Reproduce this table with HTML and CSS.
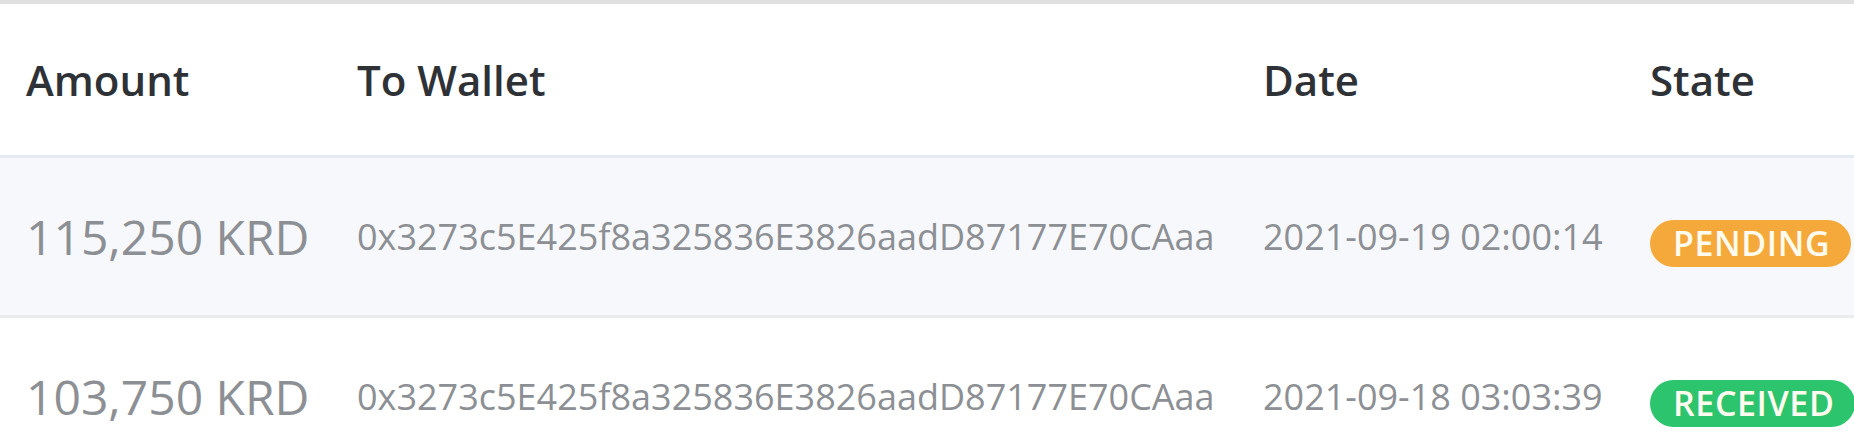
FILE: index.html
```
<html lang="en">

<head>
    <meta charset="UTF-8">
    <meta name="viewport" content="width=device-width, initial-scale=1.0">
    <title>Withdrawals</title>
    <link rel="stylesheet" href="styles.css">
</head>

<body>
    <div class="history">
        <table class="history-table">
            <thead>
                <tr>
                    <th class="col-amount">Amount</th>
                    <th class="col-wallet">To Wallet</th>
                    <th class="col-date">Date</th>
                    <th class="col-state">State</th>
                </tr>
            </thead>
            <tbody>
                <tr class="striped">
                    <td class="amount">115,250 KRD</td>
                    <td>0x3273c5E425f8a325836E3826aadD87177E70CAaa</td>
                    <td>2021-09-19 02:00:14</td>
                    <td class="state"><span class="badge pending">PENDING</span></td>
                </tr>
                <tr>
                    <td class="amount">103,750 KRD</td>
                    <td>0x3273c5E425f8a325836E3826aadD87177E70CAaa</td>
                    <td>2021-09-18 03:03:39</td>
                    <td class="state"><span class="badge received">RECEIVED</span></td>
                </tr>
            </tbody>
        </table>
    </div>
</body>

</html>
```

FILE: styles.css
```
* {
    box-sizing: border-box;
}

body {
    margin: 0;
    background: #fff;
    font-family: 'Open Sans', 'Noto Sans', sans-serif;
    overflow: hidden;
}

.history {
    border-top: 4px solid #e0e0e0;
}

.history-table {
    width: 100%;
    border-collapse: collapse;
    table-layout: fixed;
}

.col-amount {
    width: 331px;
}

.col-wallet {
    width: 906px;
}

.col-date {
    width: 387px;
}

th {
    height: 152px;
    padding: 0 26px;
    text-align: left;
    font-size: 42px;
    font-weight: 600;
    color: #2e3236;
    border-bottom: 3px solid #e4ebf2;
}

td {
    height: 160px;
    padding: 0 26px;
    font-size: 36px;
    color: #8c8f94;
    white-space: nowrap;
    vertical-align: middle;
}

tbody tr {
    border-bottom: 3px solid #ebecee;
}

.striped {
    background: #f7f8fb;
}

.amount {
    font-size: 48px;
}

.state {
    padding-top: 14px;
}

.badge {
    display: inline-block;
    height: 47px;
    line-height: 47px;
    padding: 0 21px 0 23px;
    border-radius: 24px;
    font-size: 34px;
    font-weight: 600;
    letter-spacing: 0.6px;
    color: #fffbef;
}

.pending {
    background: #f6a93b;
}

.received {
    background: #2dc46e;
}
```
